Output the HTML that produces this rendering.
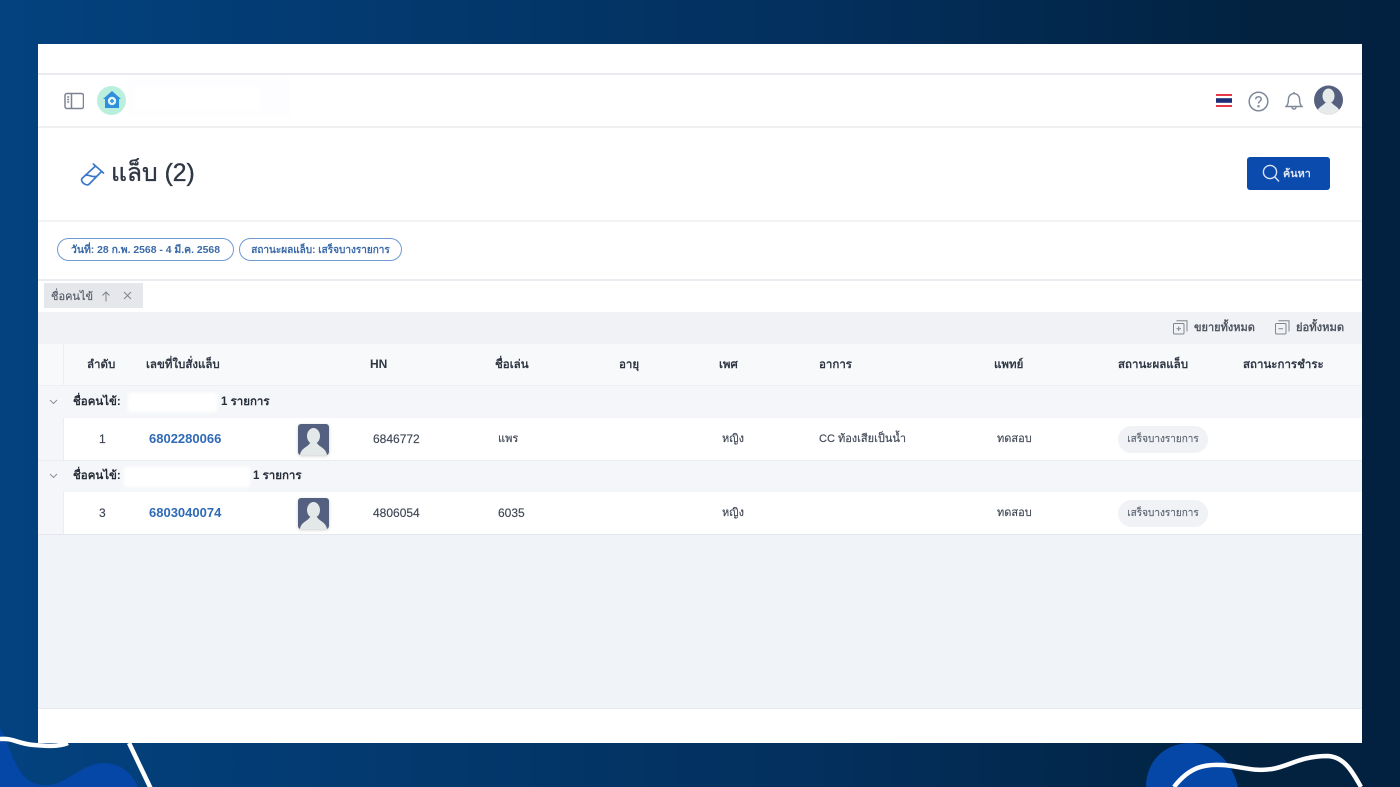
<!DOCTYPE html>
<html><head><meta charset="utf-8">
<style>
html,body{margin:0;padding:0;width:1400px;height:787px;overflow:hidden}
body{position:relative;background:linear-gradient(90deg,#03427f 0%,#033a70 25%,#032f5c 60%,#022240 90%,#022140 100%);font-family:"Liberation Sans","Noto Sans CJK SC","WenQuanYi Zen Hei",sans-serif;color:#3a4250}
.a{position:absolute}
.t{position:absolute;white-space:nowrap;line-height:16px;font-size:12px;filter:blur(.3px)}
.b{font-weight:700;color:#2f3744;font-size:11.5px}
.c{font-size:12px;color:#3f4754;-webkit-text-stroke:.15px #3f4754}
.th{font-size:11px}
.l{font-size:13px;font-weight:700;color:#2f6ab5}
.hr{position:absolute;left:38px;width:1324px}
.pill{position:absolute;height:21px;border:1.5px solid #6f9ad2;border-radius:12px;font-weight:700;color:#3a6aa8;line-height:24px;text-align:center;background:#fff;white-space:nowrap}
.st{position:absolute;left:1118px;width:90px;height:27px;border-radius:14px;background:#f0f2f6;font-size:10px;line-height:28px;text-align:center;color:#5d6572;white-space:nowrap;-webkit-text-stroke:.15px #5d6572}
.av{position:absolute;left:298px;width:31px;height:31px;border-radius:3px;background:#54607f;overflow:hidden;box-shadow:0 1px 3px rgba(0,0,0,.2)}
</style></head><body>
<svg class="a" style="left:0;top:700px" width="200" height="87" viewBox="0 700 200 87">
<path d="M0 728 C8 742 12 760 22 774 C32 787 50 788 62 781 C78 773 88 763 104 763 C120 763 132 773 138 787 L0 787Z" fill="#0447a6"/>
<path d="M0 739 C14 738 18 744 34 745 C46 746 58 747 68 743" fill="none" stroke="#fff" stroke-width="4.5"/>
<path d="M129 743 L151 789" fill="none" stroke="#fff" stroke-width="4.5"/>
</svg>
<svg class="a" style="left:1120px;top:700px" width="280" height="87" viewBox="1120 700 280 87">
<path d="M1146 787 C1146 760 1166 743 1190 743 C1214 743 1232 762 1238 787Z" fill="#0447a6"/>
<path d="M1174 787 C1190 766 1206 764 1222 765 C1240 766 1252 772 1272 769 C1290 766 1300 756 1328 756 C1345 757 1353 773 1361 787" fill="none" stroke="#fff" stroke-width="4.5"/>
</svg>

<div class="a" style="left:38px;top:44px;width:1324px;height:699px;background:#fff"></div>
<div class="hr" style="top:73px;height:2px;background:#e9ebee"></div>
<div class="hr" style="top:126px;height:2px;background:#eff0f2"></div>
<div class="hr" style="top:220px;height:2px;background:#f2f3f5"></div>
<div class="hr" style="top:279px;height:2px;background:#e9edf2"></div>

<!-- gray table areas -->
<div class="hr" style="top:312px;height:32px;background:#f1f2f5"></div>
<div class="hr" style="top:344px;height:41px;background:#f8f9fb;border-bottom:1px solid #edeff3;box-sizing:content-box"></div>
<div class="a" style="left:63px;top:344px;width:1px;height:41px;background:#eceef2"></div>
<div class="hr" style="top:386px;height:32px;background:#f5f6f9"></div>
<div class="hr" style="top:418px;height:42px;background:#fff;border-bottom:1px solid #e9ecf1"></div>
<div class="hr" style="top:461px;height:31px;background:#f5f6f9"></div>
<div class="hr" style="top:492px;height:42px;background:#fff;border-bottom:1px solid #e4e8ee"></div>
<div class="a" style="left:38px;top:418px;width:26px;height:42px;background:#f5f6f9;border-right:1px solid #e9ecf1;box-sizing:border-box"></div>
<div class="a" style="left:38px;top:492px;width:26px;height:42px;background:#f5f6f9;border-right:1px solid #e9ecf1;box-sizing:border-box"></div>
<div class="hr" style="top:535px;height:173px;background:#f0f3f8;border-bottom:1px solid #e4e9ee"></div>

<!-- redaction patches -->
<div class="a" style="left:127px;top:79px;width:163px;height:36px;background:#fdfdff;filter:blur(2px)"></div>
<div class="a" style="left:135px;top:87px;width:125px;height:24px;background:#fff;filter:blur(1px)"></div>
<div class="a" style="left:128px;top:393px;width:89px;height:19px;background:#fff;filter:blur(1.5px)"></div>
<div class="a" style="left:124px;top:467px;width:126px;height:20px;background:#fff;filter:blur(1.5px)"></div>

<!-- top bar -->
<svg class="a" style="left:64px;top:92px" width="20" height="18" viewBox="0 0 20 18" fill="none" stroke="#7b8494" stroke-width="1.5"><rect x="1" y="1.5" width="18.5" height="15" rx="2"/><path d="M7.5 1.5V16.5M3.2 5H5.2M3.2 7.5H5.2M3.2 10H5.2" /></svg>
<div class="a" style="left:97px;top:86px;width:29px;height:29px;border-radius:50%;background:#b9efdc"></div>
<svg class="a" style="left:102px;top:90px" width="20" height="20" viewBox="0 0 20 20"><path d="M10 1 L19 9 H17 V18 H3 V9 H1Z" fill="#2f8fdc"/><circle cx="10" cy="11" r="4.2" fill="#dff4f2"/><path d="M10 9V13M8 11H12" stroke="#2f8fdc" stroke-width="1.4"/></svg>
<svg class="a" style="left:1216px;top:94px" width="16" height="13"><rect width="16" height="13" fill="#e8394a"/><rect y="2" width="16" height="9" fill="#fff"/><rect y="4.2" width="16" height="4.6" fill="#1c2f78"/></svg>
<svg class="a" style="left:1248px;top:91px" width="21" height="21" viewBox="0 0 21 21" fill="none" stroke="#7f8898" stroke-width="1.5"><circle cx="10.5" cy="10.5" r="9.3"/><path d="M7.8 8.2C7.8 5 13.2 5 13.2 8.2C13.2 10.2 10.5 10.2 10.5 12.5"/><circle cx="10.5" cy="15.3" r=".5"/></svg>
<svg class="a" style="left:1285px;top:91px" width="18" height="20" viewBox="0 0 18 20" fill="none" stroke="#7f8898" stroke-width="1.4"><path d="M1 15.5C3 14 3.4 12 3.4 8.5C3.4 5 6 2.6 9 2.6C12 2.6 14.6 5 14.6 8.5C14.6 12 15 14 17 15.5Z"/><path d="M9 1V2.6M7 16C7 18.8 11 18.8 11 16"/></svg>
<svg class="a" style="left:1314px;top:85px" width="29" height="30" viewBox="0 0 29 30"><defs><clipPath id="c0"><circle cx="14.5" cy="15" r="14.5"/></clipPath></defs><g clip-path="url(#c0)"><rect width="29" height="30" fill="#55607f"/><ellipse cx="14.5" cy="11" rx="6" ry="7.5" fill="#e6eaea"/><path d="M2 30C3 22 9 21 11 18H18C20 21 26 22 27 30Z" fill="#e6eaea"/></g></svg>

<!-- heading -->
<svg class="a" style="left:80px;top:161px" width="25" height="25" viewBox="0 0 25 25" fill="none" stroke="#3b78c9" stroke-width="1.7" stroke-linejoin="round" stroke-linecap="round"><path d="M13.3 3L23.5 12"/><path d="M15.5 5L2.2 17.2C-.5 20.5 6.5 26 9.3 23L21.5 10.5"/><path d="M5 14.5C9 13 11 16.5 16 15.5"/></svg>
<div class="t" style="left:111px;top:159px;font-size:24.7px;line-height:30px;color:#2f3744;-webkit-text-stroke:.35px #2f3744">แล็บ (2)</div>
<div class="a" style="left:1247px;top:157px;width:83px;height:33px;border-radius:3px;background:#0b4bad"></div>
<svg class="a" style="left:1262px;top:164px" width="18" height="19" viewBox="0 0 18 19" fill="none" stroke="#d9e3f4" stroke-width="1.4"><circle cx="8" cy="8" r="6.6"/><path d="M12.8 13L17 17.5"/></svg>
<div class="t" style="left:1283px;top:166px;font-size:10.8px;font-weight:700;color:#dfe7f5">ค้นหา</div>

<!-- pills -->
<div class="pill" style="left:57px;top:238px;width:175px;font-size:10.4px">วันที่: 28 ก.พ. 2568 - 4 มี.ค. 2568</div>
<div class="pill" style="left:239px;top:238px;width:161px;font-size:10px">สถานะผลแล็บ: เสร็จบางรายการ</div>

<!-- group chip -->
<div class="a" style="left:44px;top:283px;width:99px;height:25px;background:#e6e7ea"></div>
<div class="t" style="left:51px;top:289px;font-size:11px;color:#555c68;-webkit-text-stroke:.15px #555c68">ชื่อคนไข้</div>
<svg class="a" style="left:101px;top:291px" width="10" height="11" viewBox="0 0 10 11" fill="none" stroke="#7e8590" stroke-width="1"><path d="M5 10.5V1M1.5 4.5L5 1L8.5 4.5"/></svg>
<svg class="a" style="left:123px;top:291px" width="9" height="9" viewBox="0 0 9 9" fill="none" stroke="#7e8590" stroke-width="1"><path d="M1 1L8 8M8 1L1 8"/></svg>

<!-- expand/collapse -->
<svg class="a" style="left:1173px;top:320px" width="15" height="15" viewBox="0 0 15 15" fill="none" stroke="#80868f" stroke-width="1"><rect x=".5" y="3.5" width="10.5" height="10.5" rx="1"/><path d="M3.5 .8H14V11.5M3.5 8.7H8M5.7 6.5V11"/></svg>
<div class="t" style="left:1194px;top:320px;font-size:11px;color:#4f5662;font-weight:700">ขยายทั้งหมด</div>
<svg class="a" style="left:1275px;top:320px" width="15" height="15" viewBox="0 0 15 15" fill="none" stroke="#80868f" stroke-width="1"><rect x=".5" y="3.5" width="10.5" height="10.5" rx="1"/><path d="M3.5 .8H14V11.5M3.5 8.7H8"/></svg>
<div class="t" style="left:1296px;top:320px;font-size:11.2px;color:#4f5662;font-weight:700">ย่อทั้งหมด</div>

<!-- headers -->
<div class="t b" style="left:87px;top:357px">ลำดับ</div>
<div class="t b" style="left:146px;top:357px">เลขที่ใบสั่งแล็บ</div>
<div class="t b" style="left:370px;top:356px;font-size:12px">HN</div>
<div class="t b" style="left:495px;top:357px">ชื่อเล่น</div>
<div class="t b" style="left:619px;top:357px">อายุ</div>
<div class="t b" style="left:719px;top:357px">เพศ</div>
<div class="t b" style="left:819px;top:357px">อาการ</div>
<div class="t b" style="left:994px;top:357px">แพทย์</div>
<div class="t b" style="left:1118px;top:357px">สถานะผลแล็บ</div>
<div class="t b" style="left:1243px;top:357px">สถานะการชำระ</div>

<!-- group 1 -->
<svg class="a" style="left:49px;top:399px" width="9" height="6" viewBox="0 0 9 6" fill="none" stroke="#8b919b" stroke-width="1"><path d="M1 1L4.5 4.5L8 1"/></svg>
<div class="t b" style="left:73px;top:394px;color:#262d38">ชื่อคนไข้:</div>
<div class="t b" style="left:221px;top:394px;color:#262d38">1 รายการ</div>
<div class="t c" style="left:99px;top:431px">1</div>
<div class="t l" style="left:149px;top:431px">6802280066</div>
<div class="av" style="top:424px"><svg width="31" height="31"><ellipse cx="15.5" cy="12" rx="6.5" ry="8" fill="#e3e8e8"/><path d="M2 31C3 24 10 23 12 19H19C21 23 28 24 29 31Z" fill="#e3e8e8"/></svg></div>
<div class="t c" style="left:373px;top:431px">6846772</div>
<div class="t c th" style="left:498px;top:431px">แพร</div>
<div class="t c th" style="left:722px;top:431px">หญิง</div>
<div class="t c th" style="left:819px;top:431px">CC ท้องเสียเป็นน้ำ</div>
<div class="t c th" style="left:997px;top:431px">ทดสอบ</div>
<div class="st" style="top:426px">เสร็จบางรายการ</div>

<!-- group 2 -->
<svg class="a" style="left:49px;top:473px" width="9" height="6" viewBox="0 0 9 6" fill="none" stroke="#8b919b" stroke-width="1"><path d="M1 1L4.5 4.5L8 1"/></svg>
<div class="t b" style="left:73px;top:468px;color:#262d38">ชื่อคนไข้:</div>
<div class="t b" style="left:253px;top:468px;color:#262d38">1 รายการ</div>
<div class="t c" style="left:99px;top:505px">3</div>
<div class="t l" style="left:149px;top:505px">6803040074</div>
<div class="av" style="top:498px"><svg width="31" height="31"><ellipse cx="15.5" cy="12" rx="6.5" ry="8" fill="#e3e8e8"/><path d="M2 31C3 24 10 23 12 19H19C21 23 28 24 29 31Z" fill="#e3e8e8"/></svg></div>
<div class="t c" style="left:373px;top:505px">4806054</div>
<div class="t c" style="left:498px;top:505px">6035</div>
<div class="t c th" style="left:722px;top:505px">หญิง</div>
<div class="t c th" style="left:997px;top:505px">ทดสอบ</div>
<div class="st" style="top:500px">เสร็จบางรายการ</div>
</body></html>
